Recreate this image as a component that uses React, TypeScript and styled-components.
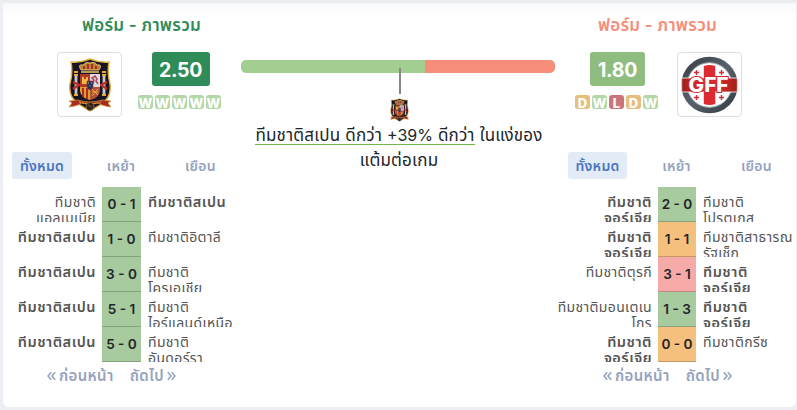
import React from "react";
import styled, { createGlobalStyle } from "styled-components";

const GlobalStyle = createGlobalStyle`
  * {
    box-sizing: border-box;
  }

  body {
    margin: 0;
    height: 410px;
    overflow: hidden;
    background: #ebeef2;
    font-family: Inter, "Noto Sans Thai", "Noto Sans", sans-serif;
    color: #212529;
  }
`;

const Card = styled.main`
  display: grid;
  grid-template-columns: 238px 314px 241px;
  width: 793px;
  height: 406px;
  margin: 1px 0 0 3px;
  border-radius: 0 0 6px 6px;
  background: linear-gradient(#e5e8ee, #f8f9fa 3px, #ffffff 14px);
`;

const Team = styled.section`
  display: flex;
  flex-direction: column;
`;

const Title = styled.h2<{ $color: string; $shift: number }>`
  height: 51px;
  margin: 0;
  padding: 10px 0 0 ${(p) => p.$shift}px;
  font-size: 17px;
  font-weight: 600;
  line-height: 28px;
  letter-spacing: 0.25px;
  white-space: nowrap;
  color: ${(p) => p.$color};
`;

const Summary = styled.div<{ $left: number; $gap: number }>`
  display: flex;
  gap: ${(p) => p.$gap}px;
  height: 100px;
  padding-left: ${(p) => p.$left}px;
`;

const CrestBox = styled.div`
  display: flex;
  align-items: center;
  justify-content: center;
  width: 65px;
  height: 65px;
  border: 1px solid #dddfe9;
  border-radius: 4px;
  background: #ffffff;
`;

const Form = styled.div`
  display: flex;
  flex-direction: column;
  align-items: center;
  gap: 9px;
  width: 83px;
`;

const Points = styled.div<{ $color: string; $width: number }>`
  width: ${(p) => p.$width}px;
  height: 34px;
  margin-left: 2px;
  border-radius: 3px;
  background: ${(p) => p.$color};
  color: #ffffff;
  font-size: 19.5px;
  font-weight: 700;
  line-height: 37px;
  letter-spacing: -0.3px;
  text-align: center;
`;

const Results = styled.div`
  display: flex;
  gap: 2px;
`;

const resultColors: Record<string, string> = {
  W: "#b4d7a8",
  D: "#e8be7c",
  L: "#c97579",
};

const Result = styled.span<{ $result: string }>`
  display: flex;
  justify-content: center;
  width: 15px;
  height: 14px;
  border-radius: 3px;
  background: ${(p) => resultColors[p.$result]};
  color: #ffffff;
  font-size: 13px;
  font-weight: 800;
  line-height: 17px;
`;

const Tabs = styled.nav<{ $left: number }>`
  display: flex;
  height: 35px;
  padding-left: ${(p) => p.$left}px;
`;

const Tab = styled.button<{ $active?: boolean; $width: number }>`
  width: ${(p) => p.$width}px;
  height: 27px;
  padding: 0;
  border: 0;
  border-radius: 3px;
  background: ${(p) => (p.$active ? "#e3ebf6" : "transparent")};
  color: ${(p) => (p.$active ? "#4c76c0" : "#95a3bd")};
  font: 600 14px/27px Inter, "Noto Sans Thai", sans-serif;
  letter-spacing: 0.25px;
  white-space: nowrap;
`;

const Match = styled.div<{ $columns: string }>`
  display: grid;
  grid-template-columns: ${(p) => p.$columns};
  height: 35px;
`;

const Name = styled.div<{ $bold: boolean; $home?: boolean }>`
  height: 35px;
  padding: ${(p) => (p.$home ? "7px 6px 0 0" : "7px 0 0 7px")};
  overflow: hidden;
  color: #555555;
  font-size: ${(p) => (p.$bold ? 14.5 : 14)}px;
  font-weight: ${(p) => (p.$bold ? 600 : 400)};
  letter-spacing: ${(p) => (p.$bold ? 0.5 : 0.35)}px;
  line-height: 16px;
  text-align: ${(p) => (p.$home ? "right" : "left")};
  white-space: pre;
`;

const scoreColors: Record<string, string> = {
  W: "#a7ca9f",
  D: "#f5c07e",
  L: "#f5aaa8",
};

const Score = styled.div<{ $result: string }>`
  border-bottom: 1px solid rgba(0, 0, 0, 0.2);
  background: ${(p) => scoreColors[p.$result]};
  font-size: 13.6px;
  font-weight: 600;
  line-height: 34px;
  text-align: center;
  white-space: nowrap;
`;

const Pager = styled.div<{ $left: number }>`
  display: flex;
  gap: 16px;
  padding: 0 0 0 ${(p) => p.$left}px;
  color: #95a3bd;
  font-size: 15px;
  font-weight: 600;
  line-height: 28px;
  letter-spacing: 0.35px;
  white-space: nowrap;
`;

const PageLink = styled.span`
  display: flex;
  align-items: center;
  gap: 3px;
`;

const Center = styled.section`
  display: flex;
  flex-direction: column;
  align-items: center;
  padding-top: 59px;
`;

const Bar = styled.div`
  display: flex;
  width: 314px;
  height: 13px;
  border-radius: 5px;
  overflow: hidden;
`;

const Share = styled.div<{ $width: number; $color: string }>`
  width: ${(p) => p.$width}px;
  background: ${(p) => p.$color};
`;

const Marker = styled.div`
  width: 2px;
  height: 26px;
  margin: -5px 0 4px 4px;
  z-index: 1;
  background: #888888;
`;

const LeaderCrest = styled.div`
  display: flex;
  height: 24px;
  padding-left: 3px;
`;

const Verdict = styled.p`
  margin: 0;
  padding: 1px 0 0 2px;
  font-size: 17px;
  line-height: 25px;
  letter-spacing: 0.2px;
  text-align: center;
  white-space: nowrap;
  color: #212529;
`;

const Highlight = styled.span`
  display: inline-block;
  height: 22px;
  border-bottom: 1px solid #71b84e;
`;

const Percent = styled.span`
  font-size: 16px;
  letter-spacing: 0;
`;

function SpainCrest({ width, height }: { width: number; height: number }) {
  return (
    <svg width={width} height={height} viewBox="0 0 44 54">
      <path d="M3 4Q12 5 22 1Q32 5 41 4Q39 15 42 26Q44 40 32 47L22 53L12 47Q0 40 2 26Q5 15 3 4Z" fill="#191424" stroke="#e2b13c" strokeWidth="1.4" />
      <path d="M13 12Q9 6 15 7Q18 3 22 5Q27 3 29 7Q35 6 31 12Z" fill="#b98235" stroke="#efd283" strokeWidth=".8" />
      <path d="M16 8v3M20 6v5M24 6v5M28 8v3" stroke="#a92524" strokeWidth="1.8" />
      <path d="M13 14h18" stroke="#e9c76a" strokeWidth="1.5" />
      <path d="M8 16v22M36 16v22" stroke="#c9c3c4" strokeWidth="2.8" />
      <path d="M6 14h4M6 17h4M6 37h4M34 14h4M34 17h4M34 37h4" stroke="#e6aa35" strokeWidth="2" />
      <path d="M5 24l6 3-6 4M39 24l-6 3 6 4" fill="none" stroke="#bc3026" strokeWidth="2.2" />
      <path d="M12 16h10v13H12z" fill="#b43828" />
      <path d="M22 16h10v13H22z" fill="#e4dbe0" />
      <path d="M12 29h10v13q-9-2-10-9z" fill="#df9d34" />
      <path d="M22 29h10v4q-1 7-10 9z" fill="#b35136" />
      <path d="M14 26v-7h2v2h2v-2h2v7z" fill="#efb944" />
      <path d="M25 26l1-4-2-2 3-2 2 3-1 2 2 3" fill="none" stroke="#a74c65" strokeWidth="1.6" />
      <path d="M15 30v9M19 30v11" stroke="#a62e27" strokeWidth="2" />
      <path d="M24 31l6 6M30 31l-6 7M24 34h6" stroke="#e3ac43" />
      <path d="M19 23h6v6q-1 3-3 3t-3-3z" fill="#163569" stroke="#b52e35" strokeWidth=".7" />
      <path d="M20 25h1M23 25h1M21.5 28h1" stroke="#efc75c" />
      <path d="M1 43l9-1q12 4 24 0l9 1-3 2 3 4q-9-1-13-4-8 2-16 0-4 3-13 4l3-4z" fill="#a82b23" stroke="#d39a35" strokeWidth=".7" />
      <path d="M11 44q11 4 22 0" fill="none" stroke="#e2aa40" strokeDasharray="2 1" />
      <ellipse cx="22" cy="48.5" rx="4" ry="4" fill="#211a20" stroke="#a37932" strokeWidth=".7" />
      <path d="M18 48h8M20 46l4 5" stroke="#8b672f" strokeWidth=".6" />
    </svg>
  );
}

function GeorgiaCrest() {
  return (
    <svg width="57" height="58" viewBox="0 0 57 58">
      <defs>
        <linearGradient id="ring" x2="1" y2="1">
          <stop stopColor="#343b43" />
          <stop offset=".5" stopColor="#59616a" />
          <stop offset="1" stopColor="#30373f" />
        </linearGradient>
        <linearGradient id="cross">
          <stop stopColor="#9f1f19" />
          <stop offset=".5" stopColor="#ef343b" />
          <stop offset="1" stopColor="#9f1f19" />
        </linearGradient>
      </defs>
      <circle cx="28.5" cy="29" r="28.3" fill="url(#ring)" />
      <circle cx="28.5" cy="29" r="22.3" fill="#fff" stroke="#a8adb2" />
      <path d="M.7 22h55.6v14H.7z" fill="url(#cross)" stroke="#fff" strokeWidth=".8" />
      <path d="M22.8 10q5.7-2 11.4 0v38q-5.7 2-11.4 0z" fill="#df2930" />
      <path d="M15.5 14v5M13 16.5h5M40.5 14v5M38 16.5h5M15.5 39v5M13 41.5h5M40.5 39v5M38 41.5h5" stroke="#d62c34" strokeWidth="1.4" />
      <text
        x="27.5"
        y="36"
        textAnchor="middle"
        fontFamily="Inter, sans-serif"
        fontWeight="800"
        fontSize="19.5"
        textLength="40"
        lengthAdjust="spacingAndGlyphs"
        fill="#fff"
        stroke="#ce2931"
        strokeWidth="2"
        paintOrder="stroke"
      >
        GFF
      </text>
    </svg>
  );
}

function Chevrons({ flipped }: { flipped?: boolean }) {
  return (
    <svg width="9" height="10" viewBox="0 0 9 10" transform={flipped ? "scale(-1 1)" : undefined}>
      <path d="M4.2 1.3L1 5l3.2 3.7M8.2 1.3L5 5l3.2 3.7" fill="none" stroke="currentColor" strokeWidth="1.6" />
    </svg>
  );
}

interface MatchData {
  home: string;
  away: string;
  score: string;
  result: string;
  side: "home" | "away";
}

const spainMatches: MatchData[] = [
  { home: "ทีมชาติ\nแอลเบเนีย", away: "ทีมชาติสเปน", score: "0 - 1", result: "W", side: "away" },
  { home: "ทีมชาติสเปน", away: "ทีมชาติอิตาลี", score: "1 - 0", result: "W", side: "home" },
  { home: "ทีมชาติสเปน", away: "ทีมชาติ\nโครเอเชีย", score: "3 - 0", result: "W", side: "home" },
  { home: "ทีมชาติสเปน", away: "ทีมชาติ\nไอร์แลนด์เหนือ", score: "5 - 1", result: "W", side: "home" },
  { home: "ทีมชาติสเปน", away: "ทีมชาติ\nอันดอร์รา", score: "5 - 0", result: "W", side: "home" },
];

const georgiaMatches: MatchData[] = [
  { home: "ทีมชาติ\nจอร์เจีย", away: "ทีมชาติ\nโปรตุเกส", score: "2 - 0", result: "W", side: "home" },
  { home: "ทีมชาติ\nจอร์เจีย", away: "ทีมชาติสาธารณ\nรัฐเช็ก", score: "1 - 1", result: "D", side: "home" },
  { home: "ทีมชาติตุรกี", away: "ทีมชาติ\nจอร์เจีย", score: "3 - 1", result: "L", side: "away" },
  { home: "ทีมชาติมอนเตเน\nโกร", away: "ทีมชาติ\nจอร์เจีย", score: "1 - 3", result: "W", side: "away" },
  { home: "ทีมชาติ\nจอร์เจีย", away: "ทีมชาติกรีซ", score: "0 - 0", result: "D", side: "home" },
];

function Matches({ matches, columns }: { matches: MatchData[]; columns: string }) {
  return (
    <div>
      {matches.map((m) => (
        <Match key={m.score} $columns={columns}>
          <Name $home $bold={m.side === "home"}>{m.home}</Name>
          <Score $result={m.result}>{m.score}</Score>
          <Name $bold={m.side === "away"}>{m.away}</Name>
        </Match>
      ))}
    </div>
  );
}

function FormResults({ results }: { results: string }) {
  return (
    <Results>
      {results.split("").map((r, i) => (
        <Result key={i} $result={r}>{r}</Result>
      ))}
    </Results>
  );
}

function Paging({ left }: { left: number }) {
  return (
    <Pager $left={left}>
      <PageLink><Chevrons /> ก่อนหน้า</PageLink>
      <PageLink>ถัดไป <Chevrons flipped /></PageLink>
    </Pager>
  );
}

export default function App() {
  return (
    <>
      <GlobalStyle />
      <Card>
        <Team>
          <Title $color="#2f8b57" $shift={79}>ฟอร์ม - ภาพรวม</Title>
          <Summary $left={54} $gap={16}>
            <CrestBox><SpainCrest width={44} height={54} /></CrestBox>
            <Form>
              <Points $color="#2f8b57" $width={58}>2.50</Points>
              <FormResults results="WWWWW" />
            </Form>
          </Summary>
          <Tabs $left={9}>
            <Tab $active $width={60}>ทั้งหมด</Tab>
            <Tab $width={98}>เหย้า</Tab>
            <Tab $width={61}>เยือน</Tab>
          </Tabs>
          <Matches matches={spainMatches} columns="99px 39px 100px" />
          <Paging left={44} />
        </Team>
        <Center>
          <Bar>
            <Share $width={184} $color="#a2ce91" />
            <Share $width={130} $color="#f58d78" />
          </Bar>
          <Marker />
          <LeaderCrest>
            <SpainCrest width={19} height={24} />
          </LeaderCrest>
          <Verdict>
            <Highlight>ทีมชาติสเปน ดีกว่า <Percent>+39%</Percent> ดีกว่า</Highlight> ในแง่ของ
            <br />
            แต้มต่อเกม
          </Verdict>
        </Center>
        <Team>
          <Title $color="#f58d78" $shift={43}>ฟอร์ม - ภาพรวม</Title>
          <Summary $left={20} $gap={19}>
            <Form>
              <Points $color="#8fbc7f" $width={55}>1.80</Points>
              <FormResults results="DWLDW" />
            </Form>
            <CrestBox><GeorgiaCrest /></CrestBox>
          </Summary>
          <Tabs $left={13}>
            <Tab $active $width={59}>ทั้งหมด</Tab>
            <Tab $width={99}>เหย้า</Tab>
            <Tab $width={61}>เยือน</Tab>
          </Tabs>
          <Matches matches={georgiaMatches} columns="103px 38px 100px" />
          <Paging left={48} />
        </Team>
      </Card>
    </>
  );
}
